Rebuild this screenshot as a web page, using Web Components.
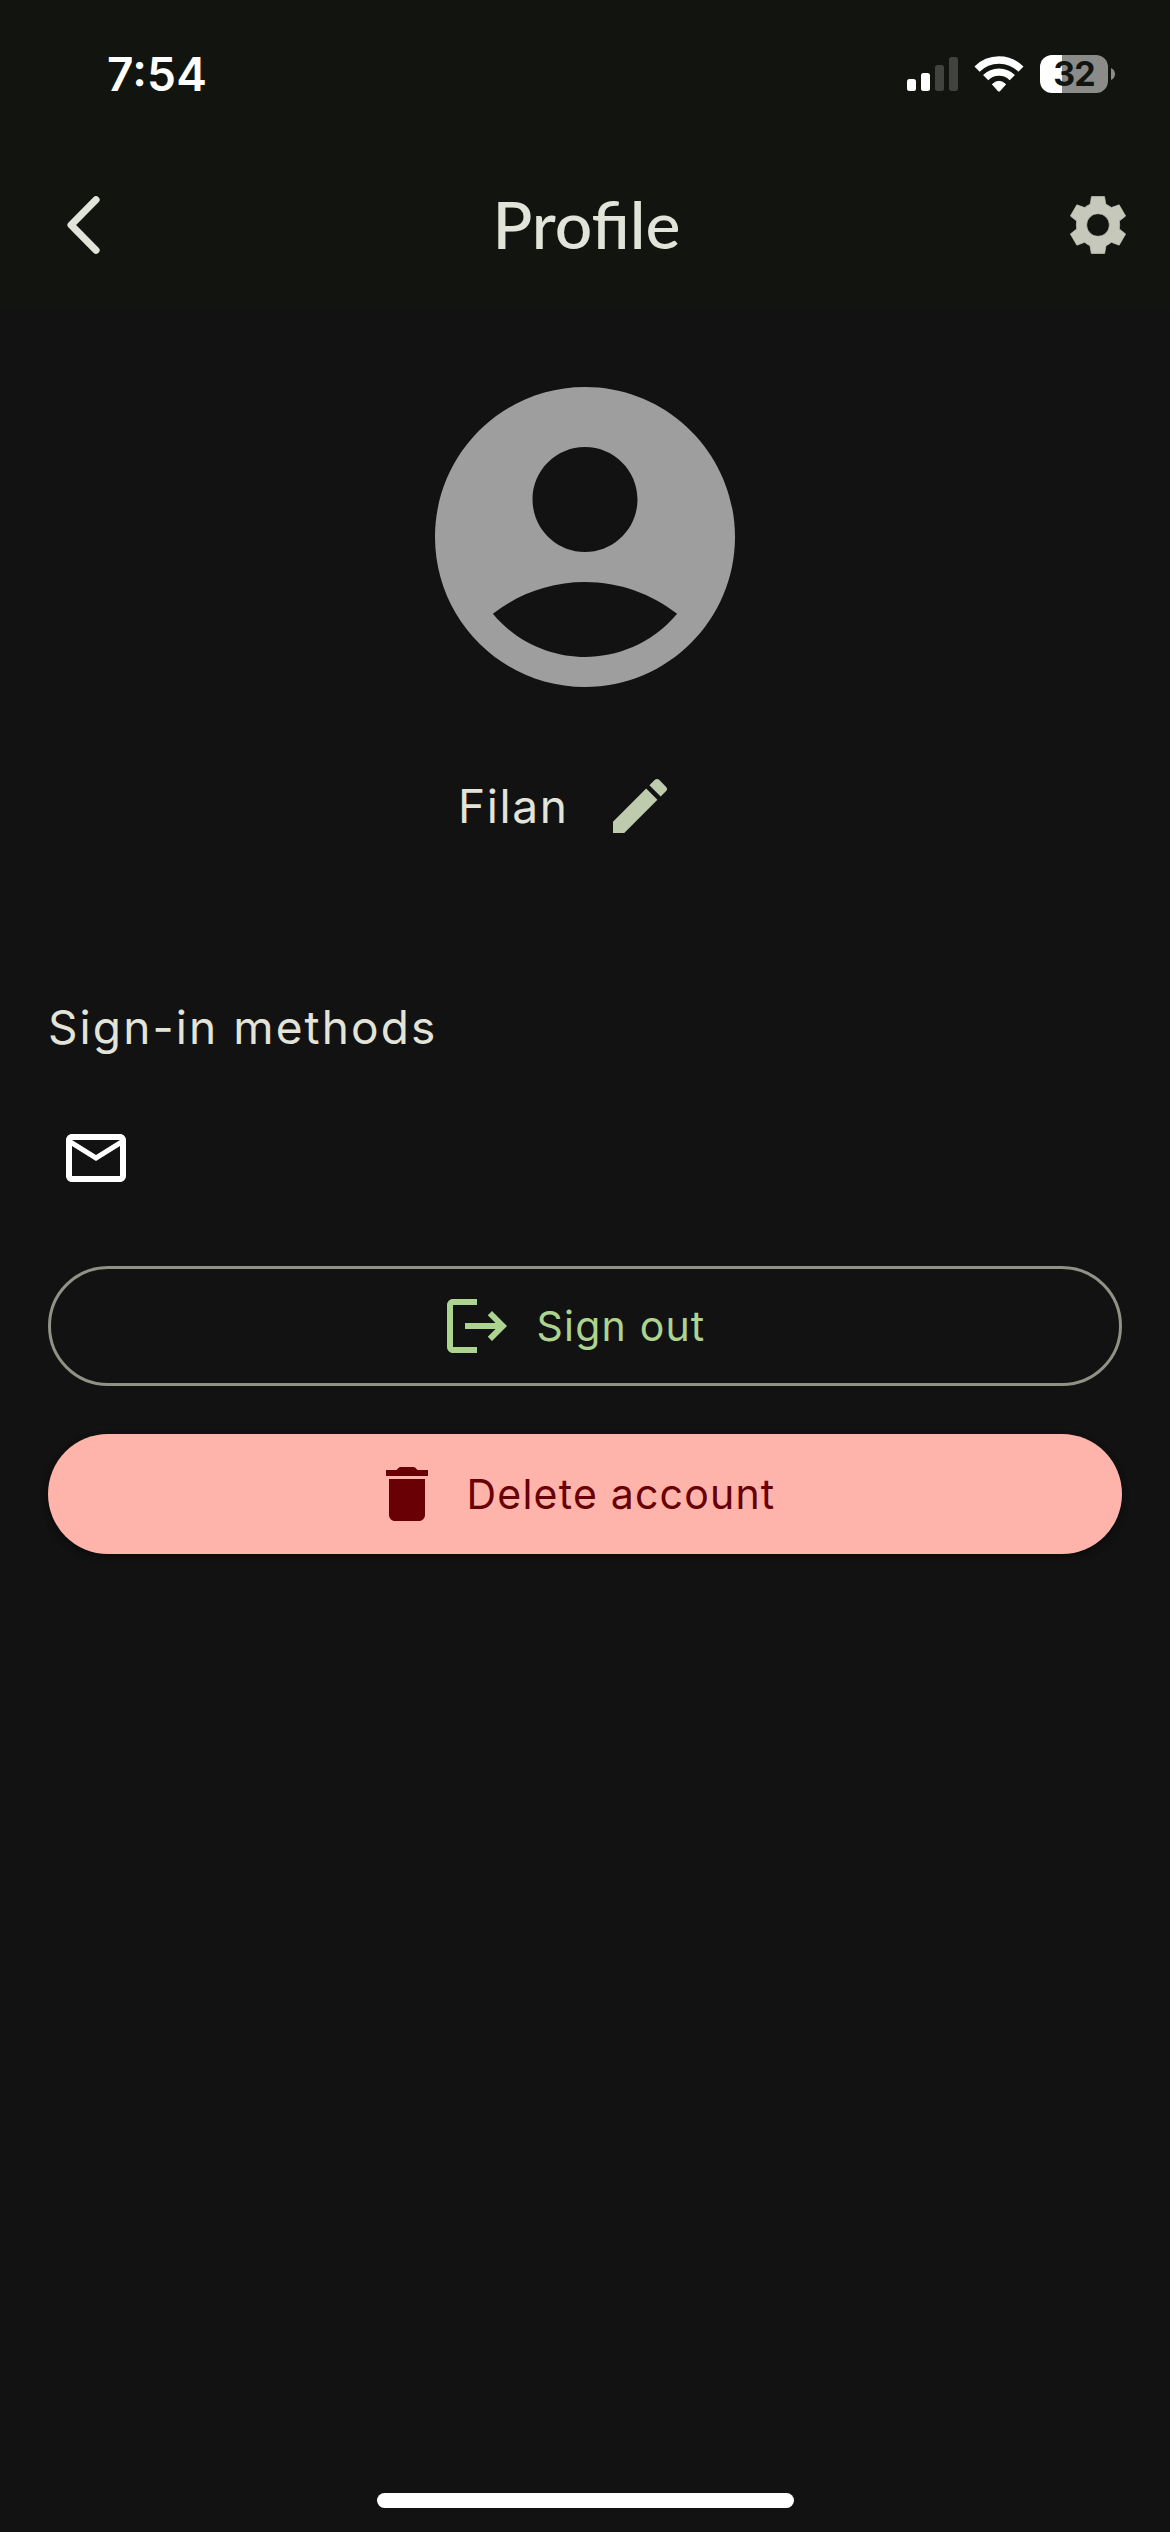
<!DOCTYPE html>
<html lang="en">
<head>
<meta charset="utf-8">
<title>Profile</title>
<style>
  html, body { margin: 0; background: #121212; }
</style>
</head>
<body>
<profile-screen></profile-screen>
<script>
const ICONS = {
  account: '<path d="M12 2C6.48 2 2 6.48 2 12s4.48 10 10 10 10-4.48 10-10S17.52 2 12 2zm0 4c1.93 0 3.5 1.57 3.5 3.5S13.93 13 12 13s-3.5-1.57-3.5-3.5S10.07 6 12 6zm0 14c-2.03 0-4.43-.82-6.14-2.88C7.55 15.8 9.68 15 12 15s4.45.8 6.14 2.12C16.43 19.18 14.03 20 12 20z"/>',
  edit: '<path d="M3 17.25V21h3.75L17.81 9.94l-3.75-3.75L3 17.25zM20.71 7.04c.39-.39.39-1.02 0-1.41l-2.34-2.34c-.39-.39-1.02-.39-1.41 0l-1.83 1.83 3.75 3.75 1.83-1.83z"/>',
  mail: '<path d="M22 6c0-1.1-.9-2-2-2H4c-1.1 0-2 .9-2 2v12c0 1.1.9 2 2 2h16c1.1 0 2-.9 2-2V6zm-2 0l-8 5-8-5h16zm0 12H4V8l8 5 8-5v10z"/>',
  logout: '<path d="M17 7l-1.41 1.41L18.17 11H8v2h10.17l-2.58 2.58L17 17l5-5zM4 5h8V3H4c-1.1 0-2 .9-2 2v14c0 1.1.9 2 2 2h8v-2H4V5z"/>',
  trash: '<path d="M6 19c0 1.1.9 2 2 2h8c1.1 0 2-.9 2-2V7H6v12zM19 4h-3.5l-.71-.71c-.18-.18-.44-.29-.7-.29H9.91c-.26 0-.52.11-.7.29L8.5 4H5v2h14V4z"/>',
  back: '<path d="M16 3.6L7.700 12L16 20.4" fill="none" stroke="currentColor" stroke-width="2.4" stroke-linecap="round" stroke-linejoin="round"/>',
  gear: '<g transform="translate(12 12) scale(.11111)"><path fill-rule="evenodd" stroke="currentColor" stroke-width="2" stroke-linejoin="round" d="M-19.500-85.500H19.500L23.500-62.500Q32.500-58.500 40-52.500L63.500-60.500L83-27L64-12Q66 0 64 12L83 27L63.500 60.500L40 52Q32.500 58.500 24 62L20 85.500H-20L-24 62Q-32.500 58.500-40 52L-63.500 60.500L-83 27L-64 12Q-66 0-64-12L-83-27L-63.500-60.500L-40-52.500Q-32.500-58.500-23.500-62.500ZM34 0A34 34 0 1 0-34 0A34 34 0 1 0 34 0Z"/></g>'
};

function define(name, html) {
  customElements.define(name, class extends HTMLElement {
    constructor() {
      super();
      const template = document.createElement('template');
      template.innerHTML = html;
      this.attachShadow({ mode: 'open' }).append(template.content.cloneNode(true));
    }
  });
}

customElements.define('md-icon', class extends HTMLElement {
  constructor() {
    super();
    this.attachShadow({ mode: 'open' });
  }
  connectedCallback() {
    this.shadowRoot.innerHTML = `
      <style>
        :host { display: block; flex: none; width: var(--icon-size, 72px); height: var(--icon-size, 72px); }
        svg { display: block; width: 100%; height: 100%; fill: currentColor; }
      </style>
      <svg viewBox="0 0 24 24">${ICONS[this.getAttribute('name')]}</svg>`;
  }
});

define('battery-level', `
  <style>
    :host { display: flex; align-items: center; gap: 3px; }
    .body { display: flex; align-items: center; justify-content: center; box-sizing: border-box;
            width: 68px; height: 38px; border-radius: 12px;
            background: linear-gradient(90deg, #fff 22px, #8b8c8a 22px);
            color: #12150f; font: 700 34px/38px Inter, sans-serif; letter-spacing: -1px; }
    svg { display: block; }
  </style>
  <div class="body"><slot></slot></div>
  <svg width="4" height="12" viewBox="0 0 4 12"><path d="M0 0Q4 2 4 6T0 12Z" fill="#8b8c8a"/></svg>`);

define('status-bar', `
  <style>
    :host { display: flex; justify-content: space-between; box-sizing: border-box; height: 141px;
            padding: 49px 55px 42px 107px; color: #fff; }
    .time { font: 560 46px/50px Inter, sans-serif; letter-spacing: .2px; font-feature-settings: "case" 1; }
    .right { display: flex; align-items: center; height: 50px; }
    svg { display: block; }
    .signal { margin-right: 16px; }
    .wifi { margin-right: 16px; }
  </style>
  <div class="time">7:54</div>
  <div class="right">
    <svg class="signal" width="51" height="36" viewBox="0 0 51 36">
      <rect y="23" width="9" height="12" rx="2.500" fill="#fff"/>
      <rect x="14" y="17" width="9" height="18" rx="2.500" fill="#fff"/>
      <rect x="28" y="9" width="9" height="26" rx="2.500" fill="#41433f"/>
      <rect x="42" y="1" width="9" height="34" rx="2.500" fill="#41433f"/>
    </svg>
    <svg class="wifi" width="50" height="38" viewBox="252 43 150 114">
      <g fill="none" stroke="#fff" stroke-width="22">
        <path d="M261.200 85.200A93 93 0 0 1 392.800 85.200"/>
        <path d="M287 111A56.500 56.500 0 0 1 367 111"/>
      </g>
      <path d="M307 131Q327 113 347 131L329 151Q327 153 325 151Z" fill="#fff" stroke="#fff" stroke-width="3" stroke-linejoin="round"/>
    </svg>
    <battery-level>32</battery-level>
  </div>`);

define('app-bar', `
  <style>
    :host { display: grid; grid-template-columns: 1fr auto 1fr; align-items: center; height: 168px;
            box-sizing: border-box; padding: 0 36px 0 48px; color: #e2e4d9; }
    .title { font: 500 66px/80px Lato, sans-serif; font-variant-ligatures: common-ligatures;
             margin-left: -9px; padding-bottom: 2px; }
    .gear { justify-self: end; color: #c5c8ba; }
  </style>
  <md-icon name="back"></md-icon>
  <div class="title"><slot></slot></div>
  <md-icon class="gear" name="gear"></md-icon>`);

define('pill-button', `
  <style>
    :host { display: flex; align-items: center; justify-content: center; gap: 24px; box-sizing: border-box;
            height: 120px; padding-right: 24px; border: 3px solid #8f9285; border-radius: 60px; color: #acd490; }
    :host([danger]) { border: 0; background: #ffb4ab; color: #690005;
            box-shadow: 0 3px 6px rgba(0,0,0,.3), 0 3px 9px rgba(0,0,0,.15); }
    .label { font: 440 41px/60px Inter, sans-serif; letter-spacing: 1.2px; white-space: nowrap; }
  </style>
  <slot name="icon"></slot>
  <div class="label"><slot></slot></div>`);

define('profile-screen', `
  <style>
    :host { display: flex; flex-direction: column; width: 1170px; height: 2532px; background: #121212;
            color: #e2e4d9; font-family: Inter, sans-serif; }
    header { background: #12150f; }
    main { display: flex; flex-direction: column; flex: 1; padding: 48px 48px 0; }
    .avatar { --icon-size: 360px; align-self: center; color: #9e9e9e; }
    .name { display: flex; align-items: center; height: 72px; margin-top: 53px; padding-left: 410px; }
    .name span { width: 146px; font: 440 46px/60px Inter, sans-serif; letter-spacing: 1.6px; }
    .name md-icon { color: #bfcbad; }
    h2 { margin: 155px 0 0; font: 440 46px/60px Inter, sans-serif; letter-spacing: 2.1px; }
    .mail { margin: 65px 0 72px 12px; color: #fff; }
    .actions { display: flex; flex-direction: column; gap: 48px; }
    footer { display: flex; justify-content: center; padding: 0 0 24px 1px; }
    .home { width: 417px; height: 15px; border-radius: 8px; background: #fff; }
  </style>
  <header>
    <status-bar></status-bar>
    <app-bar>Profile</app-bar>
  </header>
  <main>
    <md-icon class="avatar" name="account"></md-icon>
    <div class="name"><span>Filan</span><md-icon name="edit"></md-icon></div>
    <h2>Sign-in methods</h2>
    <md-icon class="mail" name="mail"></md-icon>
    <div class="actions">
      <pill-button><md-icon slot="icon" name="logout"></md-icon>Sign out</pill-button>
      <pill-button danger><md-icon slot="icon" name="trash"></md-icon>Delete account</pill-button>
    </div>
  </main>
  <footer><div class="home"></div></footer>`);
</script>
</body>
</html>
